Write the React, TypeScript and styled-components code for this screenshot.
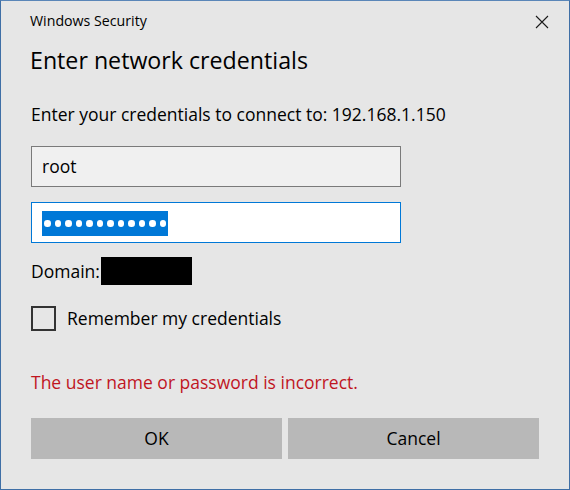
import styled, { createGlobalStyle } from "styled-components";

const GlobalStyle = createGlobalStyle`
  html, body {
    margin: 0;
    padding: 0;
    background: #e6e6e6;
  }
  * {
    box-sizing: border-box;
  }
`;

export default function App() {
  return (
    <>
      <GlobalStyle />
      <Window>
        <TitleBar>
          <Caption>Windows Security</Caption>
          <CloseButton aria-label="Close">
            <svg width="14" height="14" viewBox="0 0 14 14">
              <path d="M1 1 L13 13 M13 1 L1 13" stroke="#1a1a1a" strokeWidth="1.1" fill="none" />
            </svg>
          </CloseButton>
        </TitleBar>
        <Content>
          <Heading>Enter network credentials</Heading>
          <Prompt>Enter your credentials to connect to: 192.168.1.150</Prompt>
          <TextBox>root</TextBox>
          <TextBox focused>
            <Selection>
              {Array.from({ length: 12 }).map((_, i) => (
                <Dot key={i} />
              ))}
            </Selection>
          </TextBox>
          <DomainRow>
            <Label>Domain:</Label>
            <Redacted />
          </DomainRow>
          <CheckRow>
            <CheckBox />
            <Label>Remember my credentials</Label>
          </CheckRow>
          <ErrorText>The user name or password is incorrect.</ErrorText>
          <ButtonRow>
            <Button>OK</Button>
            <Button>Cancel</Button>
          </ButtonRow>
        </Content>
      </Window>
    </>
  );
}

const Window = styled.div`
  width: 570px;
  height: 490px;
  border: 1px solid #3f6fa6;
  border-top-color: #5a86b8;
  background: #e6e6e6;
  font-family: "Open Sans", "Noto Sans", sans-serif;
  color: #000000;
  display: flex;
  flex-direction: column;
`;

const TitleBar = styled.div`
  display: flex;
  justify-content: space-between;
  align-items: flex-start;
  padding: 10px 20px 0 29px;
`;

const Caption = styled.div`
  font-size: 14.2px;
  line-height: 19px;
  color: #000000;
`;

const CloseButton = styled.div`
  width: 14px;
  height: 14px;
  margin-top: 4px;
  display: flex;

  svg {
    display: block;
  }
`;

const Content = styled.div`
  display: flex;
  flex-direction: column;
  padding: 0 30px;
`;

const Heading = styled.h1`
  margin: 15px 0 0 -1px;
  font-size: 23.2px;
  line-height: 31px;
  font-weight: 400;
  color: #000000;
`;

const Prompt = styled.p`
  margin: 27px 0 0 0;
  font-size: 17.5px;
  line-height: 23px;
`;

const TextBox = styled.div<{ focused?: boolean }>`
  width: 370px;
  height: 41px;
  margin-top: ${(p) => (p.focused ? "15px" : "20px")};
  padding: 0 10px;
  display: flex;
  align-items: center;
  font-size: 17.5px;
  line-height: 23px;
  background: ${(p) => (p.focused ? "#ffffff" : "#f0f0f0")};
  border: 1px solid ${(p) => (p.focused ? "#0078d7" : "#7a7a7a")};
`;

const Selection = styled.span`
  display: inline-flex;
  align-items: center;
  height: 25px;
  margin-top: 2px;
  background: #0078d7;
`;

const Dot = styled.span`
  width: 10.5px;
  height: 7px;
  display: inline-flex;
  justify-content: center;

  &::before {
    content: "";
    width: 6.5px;
    height: 6.5px;
    border-radius: 50%;
    background: #ffffff;
  }
`;

const Label = styled.span`
  font-size: 17.5px;
  line-height: 23px;
`;

const DomainRow = styled.div`
  display: flex;
  align-items: center;
  margin-top: 14px;
  height: 28px;
`;

const Redacted = styled.span`
  width: 91px;
  height: 28px;
  margin-left: 1px;
  background: #000000;
`;

const CheckRow = styled.div`
  display: flex;
  align-items: center;
  gap: 11px;
  margin-top: 21px;
`;

const CheckBox = styled.span`
  width: 25px;
  height: 25px;
  border: 2px solid #333333;
  background: transparent;
`;

const ErrorText = styled.p`
  margin: 40px 0 0 0;
  font-size: 17.5px;
  line-height: 23px;
  color: #c0151f;
`;

const ButtonRow = styled.div`
  display: grid;
  grid-template-columns: 1fr 1fr;
  gap: 6px;
  margin-top: 24px;
`;

const Button = styled.div`
  height: 41px;
  display: flex;
  align-items: center;
  justify-content: center;
  background: #b8b8b8;
  font-size: 17.5px;
  line-height: 23px;
  color: #000000;
`;
